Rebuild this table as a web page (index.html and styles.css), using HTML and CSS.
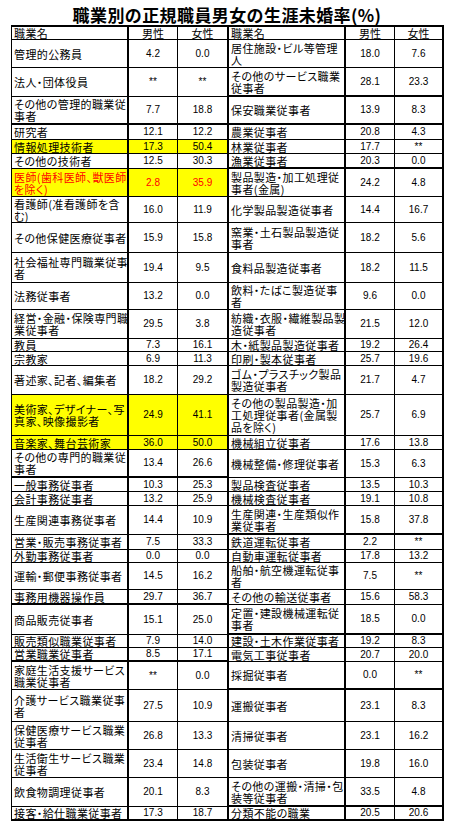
FILE: index.html
```html
<!DOCTYPE html>
<html lang="ja">
<head>
<meta charset="utf-8">
<title>職業別の正規職員男女の生涯未婚率(%)</title>
<link rel="stylesheet" href="styles.css">
</head>
<body>
<h1 class="title">職業別の正規職員男女の生涯未婚率(%)</h1>
<table class="tbl">
<colgroup>
<col class="c-name"><col class="c-num"><col class="c-numr"><col class="c-name"><col class="c-num"><col class="c-numl">
</colgroup>
<tr class="hd" style="height:13px"><td class="nm">職業名</td><td class="v">男性</td><td class="v mid">女性</td><td class="nm">職業名</td><td class="v">男性</td><td class="v">女性</td></tr>
<tr style="height:28px"><td class="nm">管理的公務員</td><td class="v">4.2</td><td class="v mid">0.0</td><td class="nm">居住施設・ビル等管理<br>人</td><td class="v">18.0</td><td class="v">7.6</td></tr>
<tr style="height:29px"><td class="nm">法人・団体役員</td><td class="v">**</td><td class="v mid">**</td><td class="nm tk">その他のサービス職業<br>従事者</td><td class="v tk">28.1</td><td class="v tk">23.3</td></tr>
<tr style="height:28px"><td class="nm tk">その他の管理的職業従<br>事者</td><td class="v tk">7.7</td><td class="v mid tk">18.8</td><td class="nm tk">保安職業従事者</td><td class="v tk">13.9</td><td class="v tk">8.3</td></tr>
<tr style="height:15px"><td class="nm">研究者</td><td class="v">12.1</td><td class="v mid">12.2</td><td class="nm">農業従事者</td><td class="v">20.8</td><td class="v">4.3</td></tr>
<tr style="height:14px"><td class="nm hl">情報処理技術者</td><td class="v hl">17.3</td><td class="v mid hl">50.4</td><td class="nm">林業従事者</td><td class="v">17.7</td><td class="v">**</td></tr>
<tr style="height:15px"><td class="nm">その他の技術者</td><td class="v">12.5</td><td class="v mid">30.3</td><td class="nm tk">漁業従事者</td><td class="v tk">20.3</td><td class="v tk">0.0</td></tr>
<tr style="height:28px"><td class="nm hl red">医師(歯科医師、獣医師<br>を除く)</td><td class="v hl red">2.8</td><td class="v mid hl red">35.9</td><td class="nm">製品製造・加工処理従<br>事者(金属)</td><td class="v">24.2</td><td class="v">4.8</td></tr>
<tr style="height:26px"><td class="nm">看護師(准看護師を含<br>む)</td><td class="v">16.0</td><td class="v mid">11.9</td><td class="nm">化学製品製造従事者</td><td class="v">14.4</td><td class="v">16.7</td></tr>
<tr style="height:30px"><td class="nm">その他保健医療従事者</td><td class="v">15.9</td><td class="v mid">15.8</td><td class="nm">窯業・土石製品製造従<br>事者</td><td class="v">18.2</td><td class="v">5.6</td></tr>
<tr style="height:30px"><td class="nm">社会福祉専門職業従事<br>者</td><td class="v">19.4</td><td class="v mid">9.5</td><td class="nm">食料品製造従事者</td><td class="v">18.2</td><td class="v">11.5</td></tr>
<tr style="height:27px"><td class="nm">法務従事者</td><td class="v">13.2</td><td class="v mid">0.0</td><td class="nm">飲料・たばこ製造従事<br>者</td><td class="v">9.6</td><td class="v">0.0</td></tr>
<tr style="height:29px"><td class="nm">経営・金融・保険専門職<br>業従事者</td><td class="v">29.5</td><td class="v mid">3.8</td><td class="nm">紡織・衣服・繊維製品製<br>造従事者</td><td class="v">21.5</td><td class="v">12.0</td></tr>
<tr style="height:13px"><td class="nm">教員</td><td class="v">7.3</td><td class="v mid">16.1</td><td class="nm">木・紙製品製造従事者</td><td class="v">19.2</td><td class="v">26.4</td></tr>
<tr style="height:14px"><td class="nm">宗教家</td><td class="v">6.9</td><td class="v mid">11.3</td><td class="nm">印刷・製本従事者</td><td class="v">25.7</td><td class="v">19.6</td></tr>
<tr style="height:29px"><td class="nm">著述家、記者、編集者</td><td class="v">18.2</td><td class="v mid">29.2</td><td class="nm">ゴム・プラスチック製品<br>製造従事者</td><td class="v">21.7</td><td class="v">4.7</td></tr>
<tr style="height:41px"><td class="nm hl">美術家、デザイナー、写<br>真家、映像撮影者</td><td class="v hl">24.9</td><td class="v mid hl">41.1</td><td class="nm">その他の製品製造・加<br>工処理従事者(金属製<br>品を除く)</td><td class="v">25.7</td><td class="v">6.9</td></tr>
<tr style="height:14px"><td class="nm hl">音楽家、舞台芸術家</td><td class="v hl">36.0</td><td class="v mid hl">50.0</td><td class="nm">機械組立従事者</td><td class="v">17.6</td><td class="v">13.8</td></tr>
<tr style="height:28px"><td class="nm tk">その他の専門的職業従<br>事者</td><td class="v tk">13.4</td><td class="v mid tk">26.6</td><td class="nm">機械整備・修理従事者</td><td class="v">15.3</td><td class="v">6.3</td></tr>
<tr style="height:14px"><td class="nm">一般事務従事者</td><td class="v">10.3</td><td class="v mid">25.3</td><td class="nm">製品検査従事者</td><td class="v">13.5</td><td class="v">10.3</td></tr>
<tr style="height:14px"><td class="nm">会計事務従事者</td><td class="v">13.2</td><td class="v mid">25.9</td><td class="nm">機械検査従事者</td><td class="v">19.1</td><td class="v">10.8</td></tr>
<tr style="height:29px"><td class="nm">生産関連事務従事者</td><td class="v">14.4</td><td class="v mid">10.9</td><td class="nm tk">生産関連・生産類似作<br>業従事者</td><td class="v tk">15.8</td><td class="v tk">37.8</td></tr>
<tr style="height:15px"><td class="nm">営業・販売事務従事者</td><td class="v">7.5</td><td class="v mid">33.3</td><td class="nm">鉄道運転従事者</td><td class="v">2.2</td><td class="v">**</td></tr>
<tr style="height:13px"><td class="nm">外勤事務従事者</td><td class="v">0.0</td><td class="v mid">0.0</td><td class="nm">自動車運転従事者</td><td class="v">17.8</td><td class="v">13.2</td></tr>
<tr style="height:27px"><td class="nm">運輸・郵便事務従事者</td><td class="v">14.5</td><td class="v mid">16.2</td><td class="nm">船舶・航空機運転従事<br>者</td><td class="v">7.5</td><td class="v">**</td></tr>
<tr style="height:15px"><td class="nm tk">事務用機器操作員</td><td class="v tk">29.7</td><td class="v mid tk">36.7</td><td class="nm">その他の輸送従事者</td><td class="v">15.6</td><td class="v">58.3</td></tr>
<tr style="height:30px"><td class="nm">商品販売従事者</td><td class="v">15.1</td><td class="v mid">25.0</td><td class="nm tk">定置・建設機械運転従<br>事者</td><td class="v tk">18.5</td><td class="v tk">0.0</td></tr>
<tr style="height:13px"><td class="nm">販売類似職業従事者</td><td class="v">7.9</td><td class="v mid">14.0</td><td class="nm">建設・土木作業従事者</td><td class="v">19.2</td><td class="v">8.3</td></tr>
<tr style="height:14px"><td class="nm tk">営業職業従事者</td><td class="v tk">8.5</td><td class="v mid tk">17.1</td><td class="nm">電気工事従事者</td><td class="v">20.7</td><td class="v">20.0</td></tr>
<tr style="height:28px"><td class="nm">家庭生活支援サービス<br>職業従事者</td><td class="v">**</td><td class="v mid">0.0</td><td class="nm tk">採掘従事者</td><td class="v tk">0.0</td><td class="v tk">**</td></tr>
<tr style="height:32px"><td class="nm">介護サービス職業従事<br>者</td><td class="v">27.5</td><td class="v mid">10.9</td><td class="nm">運搬従事者</td><td class="v">23.1</td><td class="v">8.3</td></tr>
<tr style="height:28px"><td class="nm">保健医療サービス職業<br>従事者</td><td class="v">26.8</td><td class="v mid">13.3</td><td class="nm">清掃従事者</td><td class="v">23.1</td><td class="v">16.2</td></tr>
<tr style="height:28px"><td class="nm">生活衛生サービス職業<br>従事者</td><td class="v">23.4</td><td class="v mid">14.8</td><td class="nm">包装従事者</td><td class="v">19.8</td><td class="v">16.0</td></tr>
<tr style="height:29px"><td class="nm">飲食物調理従事者</td><td class="v">20.1</td><td class="v mid">8.3</td><td class="nm tk">その他の運搬・清掃・包<br>装等従事者</td><td class="v tk">33.5</td><td class="v tk">4.8</td></tr>
<tr class="last" style="height:14px"><td class="nm">接客・給仕職業従事者</td><td class="v">17.3</td><td class="v mid">18.7</td><td class="nm">分類不能の職業</td><td class="v">20.5</td><td class="v">20.6</td></tr>
</table>
</body>
</html>
```

FILE: styles.css
```css
html, body {
  margin: 0;
  padding: 0;
  background: #ffffff;
}

body {
  width: 454px;
  font-family: "Noto Sans CJK JP", "Noto Sans", sans-serif;
  color: #000;
}

.title {
  margin: 0;
  width: 454px;
  height: 25px;
  box-sizing: border-box;
  padding: 5px 0 0 0;
  font-size: 17px;
  line-height: 20px;
  font-weight: bold;
  text-align: center;
  letter-spacing: 0.4px;
  white-space: nowrap;
}

.tbl {
  margin-left: 11px;
  border-collapse: separate;
  border-spacing: 0;
  table-layout: fixed;
  width: 433px;
  border-top: 2px solid #000;
  border-left: 1px solid #000;
}

.c-name { width: 117px; }
.c-num { width: 49px; }
.c-numr { width: 51px; }
.c-numl { width: 49px; }

.tbl td {
  box-sizing: border-box;
  padding: 0;
  border-right: 1px solid #000;
  border-bottom: 1px solid #000;
  vertical-align: middle;
}

.tbl td.nm {
  padding-left: 2px;
  font-size: 11px;
  line-height: 12px;
  text-align: left;
  white-space: nowrap;
  font-feature-settings: "palt";
  letter-spacing: 0.4px;
  border-right: 2px solid #000;
}

.tbl td.v {
  font-family: "Liberation Sans", Arial, sans-serif;
  font-size: 10px;
  line-height: 12px;
  text-align: center;
  white-space: nowrap;
}

.tbl tr.hd td.v {
  font-family: "Noto Sans CJK JP", sans-serif;
  font-size: 11px;
}

.tbl td.mid,
.tbl td:last-child {
  border-right: 2px solid #000;
}

.tbl td.tk,
.tbl tr.last td {
  border-bottom: 2px solid #000;
}

.tbl td.hl {
  background: #ffff00;
}

.tbl td.red {
  color: #ff0000;
}
```
